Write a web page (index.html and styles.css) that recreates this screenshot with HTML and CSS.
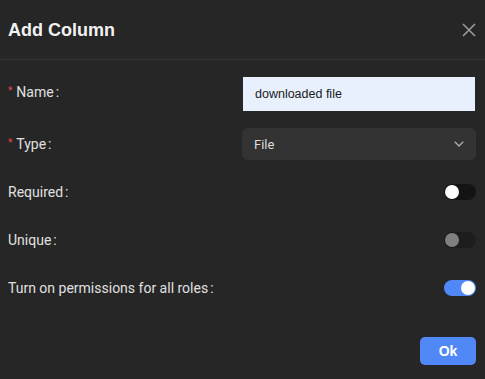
FILE: index.html
```html
<!DOCTYPE html>
<html lang="en">
<head>
  <meta charset="UTF-8" />
  <meta name="viewport" content="width=device-width, initial-scale=1.0"/>
  <title>Add Column</title>
  <link rel="stylesheet" href="styles.css">
</head>
<body>

  <div class="modal">
    <div class="modal-header">
      <h1>Add Column</h1>
      <button class="close-btn" aria-label="Close">
        <svg width="14" height="14" viewBox="0 0 14 14">
          <path d="M1 1 L13 13 M13 1 L1 13" stroke="#9a9a9a" stroke-width="1.6" fill="none"/>
        </svg>
      </button>
    </div>

    <form class="modal-body">
      <div class="form-row first">
        <label for="colName" class="required">Name</label>
        <input type="text" id="colName" class="text-input" value="downloaded file" />
      </div>

      <div class="form-row">
        <label class="required">Type</label>
        <div class="select">
          <span>File</span>
          <svg width="10" height="6" viewBox="0 0 10 6">
            <polyline points="0.8,0.8 5,5 9.2,0.8" stroke="#b0b0b0" stroke-width="1.3" fill="none"/>
          </svg>
        </div>
      </div>

      <div class="form-row">
        <label>Required</label>
        <span class="switch"><span class="knob"></span></span>
      </div>

      <div class="form-row">
        <label>Unique</label>
        <span class="switch disabled"><span class="knob"></span></span>
      </div>

      <div class="form-row">
        <label>Turn on permissions for all roles</label>
        <span class="switch on"><span class="knob"></span></span>
      </div>
    </form>

    <div class="modal-footer">
      <button class="ok-btn">Ok</button>
    </div>
  </div>

</body>
</html>
```

FILE: styles.css
```css
:root {
  --bg: #262626;
  --fg: #e0e0e0;
  --accent: #5088f7;
  --border: #363636;
  --danger: #e5484d;
}

body {
  margin: 0;
  background: var(--bg);
  color: var(--fg);
  font-family: Roboto, "Liberation Sans", sans-serif;
}

.modal-header {
  display: flex;
  align-items: center;
  justify-content: space-between;
  height: 59px;
  padding: 0 9px 0 8px;
  border-bottom: 1px solid var(--border);
}

h1 {
  margin: 0;
  font-family: "Liberation Sans", Arial, sans-serif;
  font-size: 18px;
  font-weight: 700;
  color: #f2f2f2;
  padding-top: 2px;
}

.close-btn {
  background: none;
  border: none;
  padding: 0;
  width: 14px;
  height: 14px;
  cursor: pointer;
  display: flex;
  margin-top: 1px;
}

.modal-body {
  display: flex;
  flex-direction: column;
  gap: 16px;
  padding: 16px 9px 0 8px;
}

.form-row {
  display: flex;
  align-items: center;
  justify-content: space-between;
  height: 32px;
}

.form-row.first {
  height: 34px;
  margin-top: 1px;
  margin-bottom: 1px;
}

label {
  font-size: 14px;
  color: var(--fg);
}

label::after {
  content: ":";
  margin-left: 2px;
}

label.required::before {
  content: "*";
  color: var(--danger);
  margin-right: 4px;
  font-size: 10px;
  position: relative;
  top: -3px;
}

.form-row.first label {
  margin-top: -4px;
}

.text-input {
  box-sizing: border-box;
  width: 232px;
  height: 34px;
  margin-right: 1px;
  border: none;
  background: #e8f0fe;
  color: #1a1a1a;
  font-family: "Liberation Sans", Arial, sans-serif;
  font-size: 12.5px;
  padding: 0 12px;
  outline: none;
}

.select {
  box-sizing: border-box;
  width: 234px;
  height: 32px;
  display: flex;
  align-items: center;
  justify-content: space-between;
  padding: 0 12px 0 12px;
  background: #333333;
  border-radius: 6px;
  font-size: 13px;
  color: #dcdcdc;
}

.switch {
  position: relative;
  width: 32px;
  height: 16px;
  border-radius: 8px;
  background: #141414;
}

.switch .knob {
  position: absolute;
  top: 1px;
  left: 1px;
  width: 14px;
  height: 14px;
  border-radius: 50%;
  background: #ffffff;
}

.switch.disabled {
  background: #1d1d1d;
}

.switch.disabled .knob {
  background: #7f7f7f;
}

.switch.on {
  background: var(--accent);
}

.switch.on .knob {
  left: 17px;
}

.modal-footer {
  display: flex;
  justify-content: flex-end;
  padding: 33px 9px 0 0;
}

.ok-btn {
  width: 56px;
  height: 28px;
  border: none;
  border-radius: 5px;
  background: var(--accent);
  color: #fff;
  font-family: "Liberation Sans", Arial, sans-serif;
  font-size: 14px;
  font-weight: 700;
  cursor: pointer;
}
```
